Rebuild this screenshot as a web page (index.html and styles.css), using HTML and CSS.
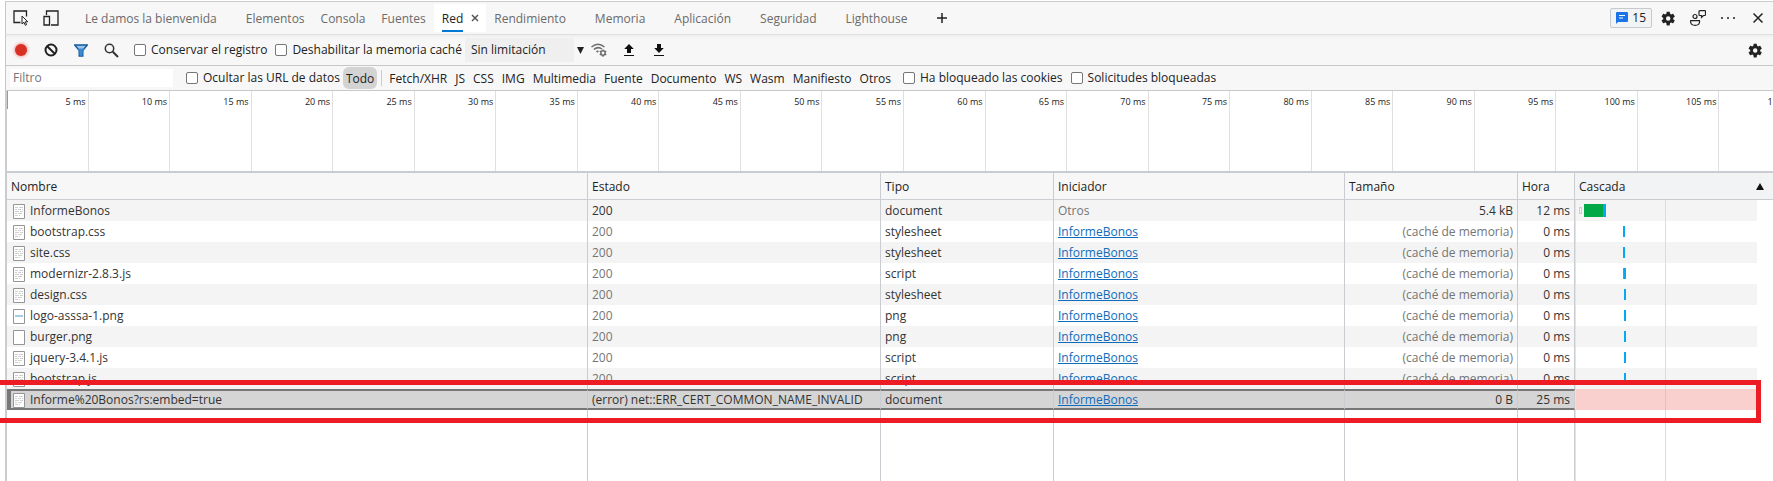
FILE: index.html
```html
<!DOCTYPE html>
<html lang="es">
<head>
  <meta charset="UTF-8">
  <meta name="viewport" content="width=device-width, initial-scale=1.0">
  <title>DevTools - Red</title>
  <link rel="stylesheet" href="styles.css">
</head>
<body>
  <!-- Iconos compartidos -->
  <svg class="sprite" aria-hidden="true">
    <symbol id="gear" viewBox="0 0 24 24">
      <path fill-rule="evenodd" d="M19.4 13c.1-.3.1-.7.1-1s0-.7-.1-1l2.4-1.8c.2-.2.3-.5.1-.7l-2.2-3.9c-.1-.3-.4-.3-.7-.2l-2.8 1.100a8 8 0 0 0-1.700-1L14 1.500c0-.3-.3-.5-.5-.5h-4c-.3 0-.5.200-.5.500l-.4 3a8 8 0 0 0-1.700 1L4 4.400c-.3-.1-.6 0-.7.200L1.100 8.500c-.1.200-.1.500.1.700L3.600 11a8 8 0 0 0 0 2l-2.400 1.800c-.2.200-.3.500-.1.700l2.200 3.900c.1.300.4.300.7.200l2.900-1.100a8 8 0 0 0 1.700 1l.4 3c0 .3.200.5.500.5h4c.2 0 .5-.2.500-.5l.4-3a8 8 0 0 0 1.700-1l2.800 1.100c.3.100.6 0 .7-.2l2.200-3.900c.1-.2.1-.5-.1-.7zM11.500 15.600a3.600 3.600 0 1 1 0-7.200 3.600 3.600 0 0 1 0 7.200z"/>
    </symbol>
    <symbol id="doc" viewBox="0 0 12 15">
      <path d="M.5.500h11v14H.5z" fill="#fff" stroke="#959595"/>
      <path d="M2 3.500h3m1 0h4M2 5.500h2m1 0h3m1 0h1M2 7.500h4m1 0h3M2 9.500h2m1 0h4M2 11.500h3m1 0h1" stroke="#cfcfcf"/>
    </symbol>
    <symbol id="img-logo" viewBox="0 0 12 15">
      <path d="M.5.500h11v14H.5z" fill="#fff" stroke="#959595"/>
      <path d="M2 7h8" stroke="#a3cbe6" stroke-width="2"/>
    </symbol>
    <symbol id="img-blank" viewBox="0 0 12 15">
      <path d="M.5.500h11v14H.5z" fill="#fff" stroke="#959595"/>
    </symbol>
  </svg>

  <div class="devtools">
    <!-- Pestañas -->
    <header class="tabbar">
      <button class="icon-btn" aria-label="Inspeccionar">
        <svg width="16" height="16" viewBox="0 0 16 16" fill="none" stroke="#222" stroke-width="1.300"><path d="M7.500 12.500H1V1h12.500v5.500"/><path d="M9 6v8l2-1.700 1.300 3 1.300-.6-1.300-2.900h2.500z" stroke-width="1"/></svg>
      </button>
      <button class="icon-btn" aria-label="Emulación de dispositivo">
        <svg width="16" height="16" viewBox="0 0 16 16" fill="none" stroke="#222" stroke-width="1.300"><path d="M3.500 5V1H15v14H8"/><path d="M1 6.500h5.500V15H1z"/></svg>
      </button>
      <nav class="tabs">
        <div class="tab closable"><button>Le damos la bienvenida</button></div>
        <div class="tab"><button>Elementos</button></div>
        <div class="tab"><button>Consola</button></div>
        <div class="tab"><button>Fuentes</button></div>
        <div class="tab active"><button>Red</button><button class="close" aria-label="Cerrar"><svg width="8" height="8" viewBox="0 0 8 8" stroke="#555" stroke-width="1.500"><path d="M1 1l6 6M7 1L1 7"/></svg></button></div>
        <div class="tab closable"><button>Rendimiento</button></div>
        <div class="tab closable"><button>Memoria</button></div>
        <div class="tab closable"><button>Aplicación</button></div>
        <div class="tab closable"><button>Seguridad</button></div>
        <div class="tab closable"><button>Lighthouse</button></div>
        <button class="add" aria-label="Más pestañas"><svg width="10" height="10" viewBox="0 0 10 10" stroke="#222" stroke-width="1.500"><path d="M5 0v10M0 5h10"/></svg></button>
      </nav>
      <div class="right-tools">
        <button class="issues">
          <svg width="12" height="12" viewBox="0 0 12 12"><path d="M1 0h10q1 0 1 1v8q0 1-1 1H2l-2 2V1q0-1 1-1z" fill="#1a73e8"/><path d="M3 3.500h6M3 6h4" stroke="#fff"/></svg>
          15
        </button>
        <button class="icon-btn" aria-label="Configuración"><svg width="15" height="15" fill="#222"><use href="#gear"/></svg></button>
        <button class="icon-btn" aria-label="Comentarios">
          <svg width="16" height="16" viewBox="0 0 16 16" fill="none" stroke="#222" stroke-width="1.200"><circle cx="5" cy="6.500" r="2"/><path d="M.7 10.700h8.800v1.800q-.5 2.800-4.400 2.800T.7 12.500zM9 1.500q0-.8.8-.8h5q.7 0 .7.800v3.200q0 .8-.7.800h-1.300l-2 1.800V5.500H9.800q-.8 0-.8-.8z"/></svg>
        </button>
        <button class="icon-btn" aria-label="Más opciones"><svg width="16" height="4" viewBox="0 0 16 4" fill="#222"><circle cx="2" cy="2" r="1"/><circle cx="8" cy="2" r="1"/><circle cx="14" cy="2" r="1"/></svg></button>
        <button class="icon-btn" aria-label="Cerrar DevTools"><svg width="10" height="10" viewBox="0 0 10 10" stroke="#222" stroke-width="1.500"><path d="M.5.500l9 9M9.500.500l-9 9"/></svg></button>
      </div>
    </header>

    <!-- Barra de red -->
    <div class="toolbar">
      <button class="icon-btn" aria-label="Grabar"><span class="record"></span></button>
      <button class="icon-btn" aria-label="Borrar"><svg width="14" height="14" viewBox="0 0 14 14" fill="none" stroke="#222" stroke-width="2"><circle cx="7" cy="7" r="5.500"/><path d="M3.200 3.200l7.600 7.600"/></svg></button>
      <button class="icon-btn" aria-label="Filtrar"><svg width="14" height="13" viewBox="0 0 14 13"><path d="M.7 1h12.600L8.800 6.500V12H5.200V6.500z" fill="#9cc3e6" stroke="#10599f" stroke-width="1.400"/><path d="M3.500 4.500h7L8.500 7v4.500h-3V7z" fill="#3c8ad0"/></svg></button>
      <button class="icon-btn" aria-label="Buscar"><svg width="15" height="15" viewBox="0 0 15 15" fill="none" stroke="#333"><circle cx="5.500" cy="5.500" r="4.200" stroke-width="1.500"/><path d="M8.800 8.800l5.200 5.200" stroke-width="2"/></svg></button>
      <label class="check"><input type="checkbox">Conservar el registro</label>
      <label class="check"><input type="checkbox">Deshabilitar la memoria caché</label>
      <div class="throttle">
        <select aria-label="Limitación"><option>Sin limitación</option></select>
        <svg width="7" height="7" viewBox="0 0 7 7" fill="#222"><path d="M0 0h7L3.500 7z"/></svg>
      </div>
      <button class="icon-btn" aria-label="Condiciones de red">
        <svg width="16" height="14" viewBox="0 0 16 14" fill="none" stroke="#6e6e6e" stroke-width="1.500"><path d="M.5 4Q7-1.500 13.500 4M2.800 6.500Q7 3 11 6"/><path d="M4.800 8.300Q6.500 6.800 8 8L6.700 9.800z" fill="#6e6e6e" stroke="none"/><circle cx="12" cy="10" r="2.200"/><path d="M12 6.500v1M12 12.500v1.200M8.800 8.200l1 .6M14.200 11.200l1 .6M8.800 11.800l1-.6M14.200 8.800l1-.6"/></svg>
      </button>
      <button class="icon-btn" aria-label="Importar"><svg width="10" height="12" viewBox="0 0 10 12" fill="#111"><path d="M5 0l4.800 5H7v4H3V5H.2zM0 11h10v1H0z"/></svg></button>
      <button class="icon-btn" aria-label="Exportar"><svg width="10" height="12" viewBox="0 0 10 12" fill="#111"><path d="M3 0h4v4h2.800L5 9 .2 4H3zM0 11h10v1H0z"/></svg></button>
      <button class="icon-btn last" aria-label="Configuración de red"><svg width="15" height="15" fill="#222"><use href="#gear"/></svg></button>
    </div>

    <!-- Filtros -->
    <div class="filterbar">
      <input type="text" class="filter-input" placeholder="Filtro" aria-label="Filtro">
      <label class="check"><input type="checkbox">Ocultar las URL de datos</label>
      <div class="types">
        <button class="selected">Todo</button>
        <span class="separator"></span>
        <button>Fetch/XHR</button>
        <button>JS</button>
        <button>CSS</button>
        <button>IMG</button>
        <button>Multimedia</button>
        <button>Fuente</button>
        <button>Documento</button>
        <button>WS</button>
        <button>Wasm</button>
        <button>Manifiesto</button>
        <button>Otros</button>
      </div>
      <label class="check"><input type="checkbox">Ha bloqueado las cookies</label>
      <label class="check"><input type="checkbox">Solicitudes bloqueadas</label>
    </div>

    <!-- Línea de tiempo -->
    <div class="overview">
      <div class="ticks">
        <span>5 ms</span><span>10 ms</span><span>15 ms</span><span>20 ms</span><span>25 ms</span><span>30 ms</span><span>35 ms</span><span>40 ms</span><span>45 ms</span><span>50 ms</span><span>55 ms</span><span>60 ms</span><span>65 ms</span><span>70 ms</span><span>75 ms</span><span>80 ms</span><span>85 ms</span><span>90 ms</span><span>95 ms</span><span>100 ms</span><span>105 ms</span><span>110 ms</span>
      </div>
    </div>

    <!-- Solicitudes -->
    <div class="requests">
      <table>
        <colgroup>
          <col>
          <col class="col-status">
          <col class="col-type">
          <col class="col-initiator">
          <col class="col-size">
          <col class="col-time">
          <col class="col-waterfall">
        </colgroup>
        <thead>
          <tr>
            <th>Nombre</th>
            <th>Estado</th>
            <th>Tipo</th>
            <th>Iniciador</th>
            <th>Tamaño</th>
            <th>Hora</th>
            <th class="sorted"><div>Cascada<svg width="8" height="7" viewBox="0 0 8 7" fill="#111"><path d="M0 7h8L4 0z"/></svg></div></th>
          </tr>
        </thead>
        <tbody>
          <tr>
            <td class="name"><svg width="12" height="15"><use href="#doc"/></svg>InformeBonos</td>
            <td>200</td>
            <td>document</td>
            <td class="dim">Otros</td>
            <td class="num">5.4 kB</td>
            <td class="num">12 ms</td>
            <td class="waterfall"><div class="bars"><i class="queue"></i><i class="wait"></i><i class="load"></i></div></td>
          </tr>
          <tr>
            <td class="name"><svg width="12" height="15"><use href="#doc"/></svg>bootstrap.css</td>
            <td class="dim">200</td>
            <td>stylesheet</td>
            <td><a href="#">InformeBonos</a></td>
            <td class="num dim">(caché de memoria)</td>
            <td class="num">0 ms</td>
            <td class="waterfall"><i class="hit" style="margin-left: 48px"></i></td>
          </tr>
          <tr>
            <td class="name"><svg width="12" height="15"><use href="#doc"/></svg>site.css</td>
            <td class="dim">200</td>
            <td>stylesheet</td>
            <td><a href="#">InformeBonos</a></td>
            <td class="num dim">(caché de memoria)</td>
            <td class="num">0 ms</td>
            <td class="waterfall"><i class="hit" style="margin-left: 48px"></i></td>
          </tr>
          <tr>
            <td class="name"><svg width="12" height="15"><use href="#doc"/></svg>modernizr-2.8.3.js</td>
            <td class="dim">200</td>
            <td>script</td>
            <td><a href="#">InformeBonos</a></td>
            <td class="num dim">(caché de memoria)</td>
            <td class="num">0 ms</td>
            <td class="waterfall"><i class="hit stalled" style="margin-left: 49px"></i></td>
          </tr>
          <tr>
            <td class="name"><svg width="12" height="15"><use href="#doc"/></svg>design.css</td>
            <td class="dim">200</td>
            <td>stylesheet</td>
            <td><a href="#">InformeBonos</a></td>
            <td class="num dim">(caché de memoria)</td>
            <td class="num">0 ms</td>
            <td class="waterfall"><i class="hit" style="margin-left: 49px"></i></td>
          </tr>
          <tr>
            <td class="name"><svg width="12" height="15"><use href="#img-logo"/></svg>logo-asssa-1.png</td>
            <td class="dim">200</td>
            <td>png</td>
            <td><a href="#">InformeBonos</a></td>
            <td class="num dim">(caché de memoria)</td>
            <td class="num">0 ms</td>
            <td class="waterfall"><i class="hit" style="margin-left: 49px"></i></td>
          </tr>
          <tr>
            <td class="name"><svg width="12" height="15"><use href="#img-blank"/></svg>burger.png</td>
            <td class="dim">200</td>
            <td>png</td>
            <td><a href="#">InformeBonos</a></td>
            <td class="num dim">(caché de memoria)</td>
            <td class="num">0 ms</td>
            <td class="waterfall"><i class="hit" style="margin-left: 49px"></i></td>
          </tr>
          <tr>
            <td class="name"><svg width="12" height="15"><use href="#doc"/></svg>jquery-3.4.1.js</td>
            <td class="dim">200</td>
            <td>script</td>
            <td><a href="#">InformeBonos</a></td>
            <td class="num dim">(caché de memoria)</td>
            <td class="num">0 ms</td>
            <td class="waterfall"><i class="hit" style="margin-left: 49px"></i></td>
          </tr>
          <tr>
            <td class="name"><svg width="12" height="15"><use href="#doc"/></svg>bootstrap.js</td>
            <td class="dim">200</td>
            <td>script</td>
            <td><a href="#">InformeBonos</a></td>
            <td class="num dim">(caché de memoria)</td>
            <td class="num">0 ms</td>
            <td class="waterfall"><i class="hit" style="margin-left: 49px"></i></td>
          </tr>
          <tr class="failed">
            <td class="name"><svg width="12" height="15"><use href="#doc"/></svg>Informe%20Bonos?rs:embed=true</td>
            <td>(error) net::ERR_CERT_COMMON_NAME_INVALID</td>
            <td>document</td>
            <td><a href="#">InformeBonos</a></td>
            <td class="num">0 B</td>
            <td class="num">25 ms</td>
            <td class="waterfall"></td>
          </tr>
          <tr class="filler">
            <td></td><td></td><td></td><td></td><td></td><td></td><td class="waterfall"></td>
          </tr>
        </tbody>
      </table>
      <div class="highlight"></div>
    </div>
  </div>
</body>
</html>
```

FILE: styles.css
```css
* {
  box-sizing: border-box;
}

body {
  margin: 0;
  height: 100vh;
  overflow: hidden;
  font-family: "Open Sans", "Noto Sans", sans-serif;
  font-size: 12px;
  line-height: 20px;
  color: #222;
  background: #fff;
}

button, input, select {
  font: inherit;
  color: inherit;
  margin: 0;
}

button {
  padding: 0;
  border: none;
  background: none;
}

svg {
  display: block;
}

.sprite {
  position: absolute;
  width: 0;
  height: 0;
}

.devtools {
  display: flex;
  flex-direction: column;
  height: 100vh;
  padding-top: 1px;
  padding-left: 5px;
}

/* Barras superiores */
.tabbar, .toolbar, .filterbar {
  display: flex;
  flex: none;
  align-items: center;
  white-space: nowrap;
  background: #f7f7f7;
  border-left: 1px solid #c8c8c8;
  border-bottom: 1px solid #c8c8c8;
}

.tabbar {
  height: 34px;
  border-top: 1px solid #ccc;
  border-bottom-color: #dedede;
}

.icon-btn {
  display: flex;
  flex: none;
  align-items: center;
  justify-content: center;
  width: 30px;
  height: 24px;
}

.tabs {
  display: flex;
  align-items: center;
  margin-left: 11px;
}

.tab {
  display: flex;
  align-items: center;
  height: 28px;
  padding: 0 8px;
  color: #6a6a6a;
}

.tab button:first-child {
  padding-top: 2px;
}

.tab.closable {
  padding-right: 21px;
}

.tab.active {
  background: #fff;
  color: #222;
  padding-right: 7px;
}

.tab.active button:first-child {
  height: 28px;
  border-top: 2px solid transparent;
  border-bottom: 2px solid #0078d4;
}

.close {
  margin-left: 8px;
}

.add {
  margin-left: 9px;
}

.right-tools {
  display: flex;
  align-items: center;
  margin-left: auto;
}

.issues {
  display: flex;
  align-items: center;
  gap: 4px;
  height: 20px;
  margin-right: 1px;
  padding: 0 5px;
  border: 1px solid #c6cacf;
  border-radius: 2px;
  background: #f1f3f4;
}

.toolbar {
  height: 31px;
  background: linear-gradient(#eee, #f7f7f7 4px);
}

.record {
  width: 12px;
  height: 12px;
  border-radius: 50%;
  background: #d93025;
  box-shadow: 0 0 3px 1px #f0a8a2;
}

.check {
  display: flex;
  align-items: center;
  gap: 5px;
  margin-left: 8px;
}

.check input {
  appearance: none;
  width: 12px;
  height: 12px;
  border: 1px solid #767676;
  border-radius: 2px;
  background: #fff;
}

.throttle {
  display: flex;
  align-items: center;
  gap: 3px;
  margin-left: 3px;
}

.throttle select {
  appearance: none;
  width: 109px;
  height: 24px;
  padding: 0 6px;
  border: none;
  border-radius: 2px;
  background: #efefef;
}

.icon-btn.last {
  margin-left: auto;
  margin-right: 3px;
}

.filterbar {
  height: 25px;
}

.filter-input {
  width: 163px;
  height: 18px;
  margin-left: 4px;
  margin-right: 5px;
  padding: 0 3px;
  border: none;
  background: #fff;
}

.filter-input::placeholder {
  color: #757575;
}

.types {
  display: flex;
  align-items: center;
  margin-left: 3px;
}

.types button {
  height: 22px;
  padding: 2px 4px 0;
}

.types .selected {
  padding: 2px 3px 0;
  border-radius: 6px;
  background: #d3d3d3;
}

.separator {
  width: 1px;
  height: 16px;
  margin: 0 3px 0 4px;
  background: #ccc;
}

/* Línea de tiempo */
.overview {
  flex: none;
  height: 82px;
  overflow: hidden;
  border-left: 2px solid #c9cdd1;
  border-bottom: 2px solid #c9cdd1;
}

.ticks {
  display: grid;
  grid-template-columns: repeat(22, 1fr);
  width: calc(100% + 28px);
  height: 100%;
  background: linear-gradient(#999, #999) 0 0 / 1px 18px no-repeat;
}

.ticks span {
  padding-right: 2px;
  border-right: 1px solid #e0e0e0;
  font-size: 9px;
  line-height: 22px;
  text-align: right;
}

/* Tabla de solicitudes */
.requests {
  position: relative;
  flex: 1;
  min-height: 0;
  border-left: 2px solid #c9cdd1;
}

table {
  width: 100%;
  height: 100%;
  table-layout: fixed;
  border-collapse: separate;
  border-spacing: 0;
}

.col-status {
  width: 293px;
}

.col-type, .col-size {
  width: 173px;
}

.col-initiator {
  width: 291px;
}

.col-time {
  width: 57px;
}

.col-waterfall {
  width: 198px;
}

th, td {
  padding: 1px 4px 0;
  border-right: 1px solid #c9cdd1;
  overflow: hidden;
  white-space: nowrap;
  text-align: left;
}

th {
  height: 27px;
  border-bottom: 1px solid #c9cdd1;
  background: #f7f7f7;
  font-weight: normal;
}

th.sorted {
  border-right: none;
  background: #f1f3f4;
}

.sorted div {
  display: flex;
  align-items: center;
  justify-content: space-between;
  padding-right: 5px;
}

td {
  height: 21px;
  color: #333;
}

.filler td {
  height: auto;
}

tbody tr:nth-child(odd):not(.filler) {
  background: #f4f4f4;
}

.name svg {
  float: left;
  margin: 3px 5px 0 2px;
}

.dim {
  color: #757575;
}

.num {
  text-align: right;
}

td a {
  color: #0f6cbd;
}

td.waterfall {
  padding: 0;
  border-right: 16px solid #fff;
  background: linear-gradient(#dcdcdc, #dcdcdc) 90px 0 / 1px 100% no-repeat;
  box-shadow: inset 1px 0 #e4e4e4;
}

.bars {
  display: flex;
  align-items: center;
  height: 13px;
  margin-left: 4px;
}

.bars i {
  height: 13px;
}

.bars .queue {
  width: 3px;
  height: 7px;
  margin-right: 2px;
  border: 1px solid #ccc;
}

.wait {
  width: 19px;
  background: #00a846;
}

.load {
  width: 3px;
  background: #03a9f4;
}

.hit {
  display: block;
  width: 2px;
  height: 11px;
  background: #03a9f4;
}

.hit.stalled {
  box-shadow: -1px 0 #8a8a8a;
}

.failed td {
  border-top: 2px solid #777;
  border-bottom: 2px solid #777;
  background: #d5d5d5;
  line-height: 16px;
}

.failed .name {
  padding-left: 0;
  border-left: 4px solid #777;
}

.failed .name svg {
  margin-top: 1px;
}

.failed td.waterfall {
  border-top: none;
  border-bottom: none;
  background: linear-gradient(#e4c0bf, #e4c0bf) 90px 0 / 1px 100% no-repeat #f9d0ce;
}

/* Marco rojo sobre la solicitud fallida */
.highlight {
  position: absolute;
  top: 207px;
  left: -12px;
  right: 12px;
  height: 43px;
  border: 5px solid #ed1c24;
}
```
